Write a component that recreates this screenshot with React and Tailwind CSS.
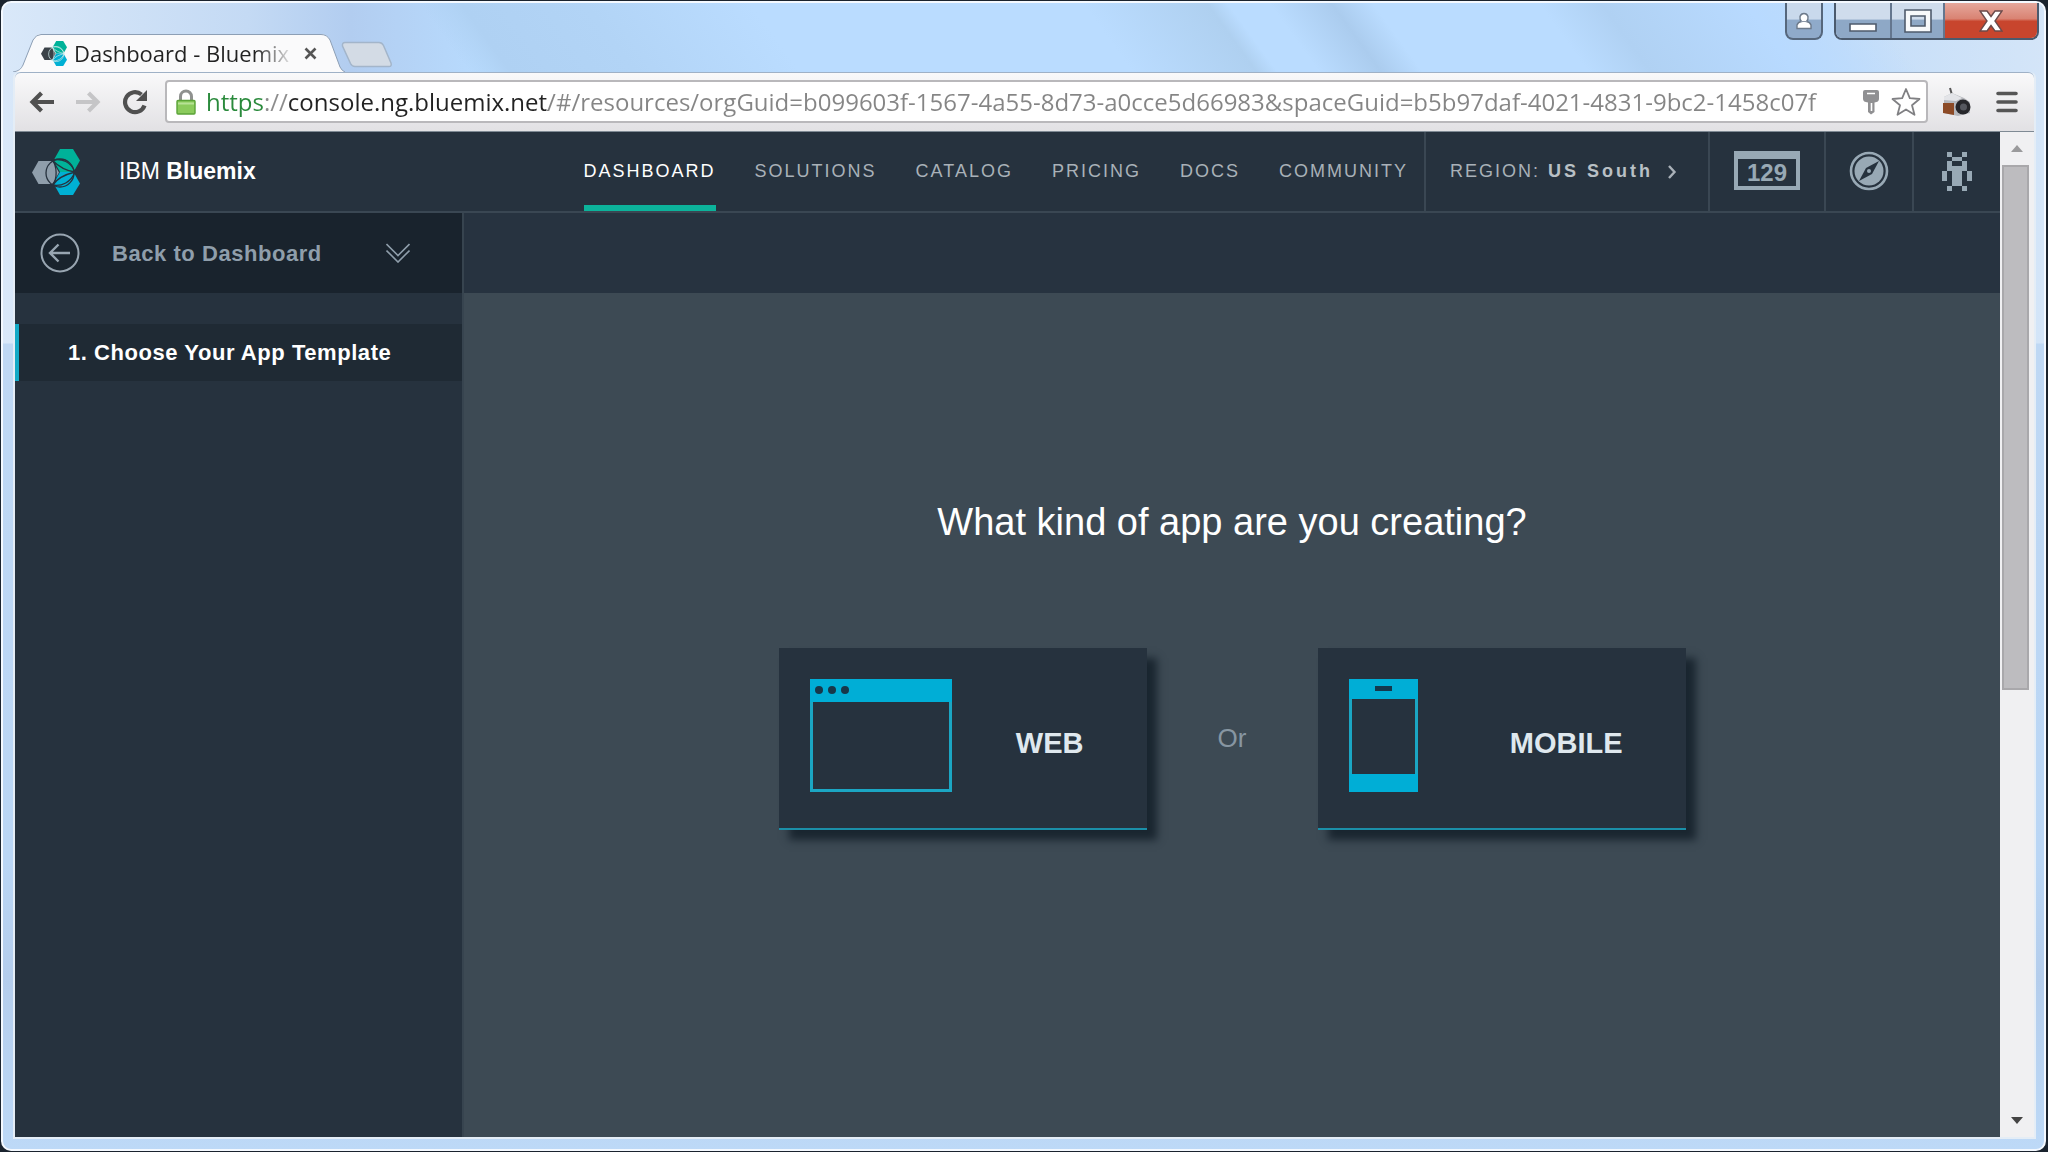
import React from "react";

const NAV = ["DASHBOARD", "SOLUTIONS", "CATALOG", "PRICING", "DOCS", "COMMUNITY"];

const URL_TEXT =
  "https://console.ng.bluemix.net/#/resources/orgGuid=b099603f-1567-4a55-8d73-a0cce5d66983&spaceGuid=b5b97daf-4021-4831-9bc2-1458c07f";

function BluemixLogo({ className, grey = "#8f9eab", line = "#26323e" }) {
  return (
    <svg className={className} viewBox="0 0 48 48" aria-hidden="true">
      <path d="M0 24.500 6.500 13H20.500L27 24.500 20.500 36H6.500Z" fill={grey} />
      <path d="M28 1H41L48 12.500 41.500 24H28L21.500 12.500Z" fill="#00b299" />
      <path d="M28 24H41.500L48 35.500 41 47H28L21.500 35.500Z" fill="#00b0d4" />
      <g fill="none" stroke={line} strokeWidth="1.300">
        <circle cx="28" cy="25" r="14" />
        <path d="M20 12C25 17 26 32 20 37M20 12C30 10 39 14 43 24C35 26 25 30 21 37M20 37C30 39 39 34 43 24C34 23 26 18 20 12" />
      </g>
    </svg>
  );
}

function Tab() {
  return (
    <div className="relative h-[38px] w-[332px]">
      <svg className="absolute inset-0 h-full w-full" viewBox="0 0 332 38" aria-hidden="true">
        <path d="M0 38C6 37 8 35 10 31L20 6Q23 0 28 0H308Q314 0 317 6L327 33Q329 37 332 38Z" fill="#fafafb" />
        <path d="M0 38C6 37 8 35 10 31L20 6Q23 .5 28 .5H308Q314 .5 317 6L327 33Q329 37 332 38" fill="none" stroke="#8d9fb5" />
      </svg>
      <div className="relative flex h-full items-center pl-[28px]">
        <BluemixLogo className="h-[27px] w-[26px]" grey="#3b4248" line="#cfe9ea" />
        <span className="ml-[7px] w-[221px] bg-linear-to-r from-[#222] from-82% to-transparent bg-clip-text text-[22px] whitespace-nowrap text-transparent">
          Dashboard - Bluemix
        </span>
        <button aria-label="Close tab" className="ml-[9px]">
          <svg className="size-[13px]" viewBox="0 0 13 13">
            <path d="M1.500 1.500 11.500 11.500M11.500 1.500 1.500 11.500" stroke="#555" strokeWidth="2.600" />
          </svg>
        </button>
      </div>
    </div>
  );
}

function TitleBar() {
  return (
    <div className="flex h-[69px] items-end justify-between bg-[linear-gradient(54deg,transparent_22%,#afd1f3_24%,#b2d4f6_30%,#badcff_38%,#badcff_54%,#afd0f0_60%,#badcff_61%,#badcff_63%,#abccee_66%,#badcff_68%,#badcff_76%,#b0d1f3_79%,#b8daff_86%,transparent_92%)]">
      <div className="flex items-end">
        <Tab />
        <button aria-label="New tab" className="mb-[4px] -ml-1">
          <svg className="h-[27px] w-[52px]" viewBox="0 0 52 27">
            <path
              d="M4 1.500H38Q41 1.500 42.500 4.500L50 22Q51 25.500 48 25.500H14Q11 25.500 9.500 22.500L1.500 5Q1 1.500 4 1.500Z"
              fill="#d3dbe5"
              stroke="#a3b5ca"
              strokeWidth="1.500"
            />
          </svg>
        </button>
      </div>
      <div className="-mr-[3px] flex self-start">
        <button
          aria-label="Profile"
          className="mr-[11px] flex h-[37px] w-[38px] items-center justify-center rounded-b-lg border-2 border-t-0 border-[#56677c] bg-linear-to-b from-[#c9d9ec] from-45% to-[#8faaca] to-50%"
        >
          <svg className="h-[18px] w-[18px]" viewBox="0 0 18 18">
            <path d="M2 16.500V13Q3 10 6.500 9.500 4.500 7.500 5 4.500 6 1.500 9 1.500T13 4.500Q13.500 7.500 11.500 9.500 15 10 16 13V16.500Z" fill="#fff" stroke="#6d7a8b" strokeWidth="1.400" />
            <path d="M6 9.500H12" stroke="#8d98a8" />
          </svg>
        </button>
        <div className="flex h-[37px] overflow-hidden rounded-b-lg border-2 border-t-0 border-[#4b5a6d]">
          <button
            aria-label="Minimize"
            className="flex w-[56px] items-end justify-center border-r-2 border-[#64768e] bg-linear-to-b from-[#cfdcec] from-45% to-[#8ea8c6] to-50% pb-[6px]"
          >
            <svg className="h-[9px] w-[28px]" viewBox="0 0 28 9">
              <path d="M1 1H27V8H1Z" fill="#fff" stroke="#4f5b6c" strokeWidth="1.600" />
            </svg>
          </button>
          <button
            aria-label="Maximize"
            className="flex w-[53px] items-center justify-center border-r-2 border-[#64768e] bg-linear-to-b from-[#cfdcec] from-45% to-[#8ea8c6] to-50%"
          >
            <svg className="h-[24px] w-[28px]" viewBox="0 0 28 24">
              <path d="M1 1H27V23H1ZM7 7V17H21V7Z" fill="#f7f9fb" fillRule="evenodd" stroke="#4f5b6c" strokeWidth="1.600" />
            </svg>
          </button>
          <button
            aria-label="Close"
            className="flex w-[92px] items-center justify-center bg-linear-to-b from-[#e5a79c] via-[#d98373] via-45% to-[#c8452d] to-52%"
          >
            <svg className="h-[22px] w-[24px]" viewBox="0 0 24 22">
              <path d="M1 1H8L12 6.500 16 1H23L16 11 23 21H16L12 15.500 8 21H1L8 11Z" fill="#fff" stroke="#6b4a4a" strokeWidth="1.400" />
            </svg>
          </button>
        </div>
      </div>
    </div>
  );
}

function Toolbar() {
  return (
    <div className="flex h-[59px] items-center rounded-t-md border-t border-[#9fb1c6] bg-linear-to-b from-[#f9f9fa] to-[#e2e1e4] pr-[16px] pb-px pl-[14px]">
      <button aria-label="Back">
        <svg className="h-[22px] w-[26px]" viewBox="0 0 26 22">
          <path d="M25 11H4M12.500 2 3.500 11 12.500 20" fill="none" stroke="#505050" strokeWidth="4.200" />
        </svg>
      </button>
      <button aria-label="Forward" className="ml-[20px]">
        <svg className="h-[22px] w-[26px]" viewBox="0 0 26 22">
          <path d="M1 11H22M13.500 2 22.500 11 13.500 20" fill="none" stroke="#c5c5c7" strokeWidth="4.200" />
        </svg>
      </button>
      <button aria-label="Reload" className="ml-[21px]">
        <svg className="size-[26px]" viewBox="0 0 26 26">
          <path d="M22.500 16.500A10 10 0 1 1 19.500 5.500" fill="none" stroke="#505050" strokeWidth="4.200" />
          <path d="M25 1V12H14Z" fill="#505050" />
        </svg>
      </button>
      <div className="ml-[17px] flex h-[43px] min-w-0 flex-1 items-center rounded-[4px] border-2 border-[#b9b8bb] bg-white pr-[5px] pl-[9px]">
        <svg className="h-[26px] w-[20px] shrink-0" viewBox="0 0 20 26" aria-hidden="true">
          <path d="M4.500 13V7.500A5.500 5.500 0 0 1 15.500 7.500V13" fill="none" stroke="#8f918f" strokeWidth="3" />
          <rect x="1" y="11.500" width="18" height="13.500" rx="1" fill="#8bcb5c" stroke="#5ba338" strokeWidth="1.400" />
          <path d="M2 14.500H18" stroke="#b7e296" strokeWidth="2" />
        </svg>
        <input
          aria-label="Address"
          defaultValue={URL_TEXT}
          className="ml-[10px] h-[38px] min-w-0 flex-1 bg-[linear-gradient(90deg,#2a8a3c_58px,#8c8c8c_58px,#8c8c8c_82px,#222_82px,#222_342px,#858585_342px)] bg-clip-text text-[24px] text-transparent outline-none"
        />
        <svg className="ml-[11px] h-[26px] w-[18px] shrink-0" viewBox="0 0 18 26" aria-hidden="true">
          <path d="M3 1H15Q17 1 17 3V10Q17 13 12.500 13.500V23L9 25.500 6 23V13.500Q1 13 1 10V3Q1 1 3 1Z" fill="#909092" />
          <path d="M5 4.500H13M9.500 14V22" stroke="#fff" strokeWidth="1.600" />
        </svg>
        <button aria-label="Bookmark this page" className="ml-[11px]">
          <svg className="size-[30px]" viewBox="0 0 30 30">
            <path d="M15 2 18.800 11.200 28.500 12 21 18.200 23.500 27.800 15 22.500 6.500 27.800 9 18.200 1.500 12 11.200 11.200Z" fill="#fff" stroke="#808083" strokeWidth="1.800" strokeLinejoin="round" />
          </svg>
        </button>
      </div>
      <button aria-label="Camera extension" className="ml-[14px]">
        <svg className="size-[30px]" viewBox="0 0 30 30">
          <path d="M8 1 10 8" stroke="#555" strokeWidth="2" />
          <path d="M2 10 10 6 22 11 28 15V26L16 29 2 26Z" fill="#b5b7bc" />
          <path d="M2 10 10 6 20 11 14 14 2 13Z" fill="#e3e4e8" />
          <path d="M1 16H12V28L1 26Z" fill="#8c4a26" />
          <circle cx="21" cy="20" r="7.500" fill="#26262a" />
          <circle cx="21.500" cy="20" r="3.500" fill="#55575e" />
        </svg>
      </button>
      <button aria-label="Menu" className="ml-[24px]">
        <svg className="h-[22px] w-[22px]" viewBox="0 0 22 22">
          <path d="M2 2.500H20M2 11H20M2 19.500H20" stroke="#555" strokeWidth="3.600" strokeLinecap="round" />
        </svg>
      </button>
    </div>
  );
}

function Header() {
  return (
    <header className="flex h-[81px] items-stretch border-b-2 border-[#3a4753] bg-[#26323e]">
      <a href="#home" className="flex items-center gap-[39px] pl-[17px] text-[23px] text-white">
        <BluemixLogo className="size-[48px]" />
        <span>
          IBM <b>Bluemix</b>
        </span>
      </a>
      <nav className="ml-auto flex gap-[39px] pr-[16px] text-[18px] tracking-[2px]">
        {NAV.map((item, i) => (
          <a
            key={item}
            href={"#" + item.toLowerCase()}
            className={
              i === 0
                ? "flex items-center border-b-6 border-[#0cb39b] pt-1.5 text-white"
                : "flex items-center text-[#a9b1b8]"
            }
          >
            {item}
          </a>
        ))}
      </nav>
      <button className="flex w-[284px] items-center border-l-2 border-[#3a4753] pl-[24px] text-[18px] tracking-[2px] text-[#a9b1b8]">
        REGION:
        <b className="ml-[8px] tracking-[3px] text-[#b9c0c5]">US South</b>
        <svg className="ml-[14px] h-[14px] w-[10px]" viewBox="0 0 10 14" aria-hidden="true">
          <path d="M2 1 7.500 7 2 13" fill="none" stroke="#a9b1b8" strokeWidth="2.400" />
        </svg>
      </button>
      <button aria-label="129 days left" className="flex w-[116px] items-center justify-center border-l-2 border-[#3a4753] pb-0.5">
        <span className="flex h-[39px] w-[66px] items-center justify-center border-4 border-t-8 border-[#98a9b5] text-[24px] leading-none font-bold text-[#98a9b5]">
          129
        </span>
      </button>
      <button aria-label="Explore" className="flex w-[88px] items-center justify-center border-l-2 border-[#3a4753] pb-0.5">
        <svg className="size-[40px]" viewBox="0 0 40 40">
          <circle cx="20" cy="20" r="18" fill="none" stroke="#98a9b5" strokeWidth="2.600" />
          <circle cx="20" cy="20" r="14.500" fill="#98a9b5" />
          <path d="M30 10 23 23 10 30 17 17Z" fill="#26323e" />
          <circle cx="20" cy="20" r="2" fill="#98a9b5" />
        </svg>
      </button>
      <button aria-label="Account" className="flex w-[88px] items-center justify-center border-l-2 border-[#3a4753] pb-0.5">
        <svg className="h-[40px] w-[30px]" viewBox="0 0 30 40" fill="#98a9b5">
          <path d="M5 1H10V6H5ZM20 1H25V6H20ZM10 6H20V10H10ZM5 10H10V15H20V10H25V20H20V35H10V20H5ZM0 20H5V30H0ZM25 20H30V30H25ZM5 35H10V40H5ZM20 35H25V40H20Z" />
        </svg>
      </button>
    </header>
  );
}

function Sidebar() {
  return (
    <aside className="flex w-[449px] shrink-0 flex-col border-r-2 border-[#37444f] bg-[#26323e]">
      <div className="flex h-[80px] items-center bg-[#19232d] pl-[25px]">
        <a href="#dashboard" className="flex items-center gap-[32px] text-[22px] font-bold tracking-wide text-[#8f9eab]">
          <svg className="size-[40px]" viewBox="0 0 40 40" fill="none" stroke="#98a5b1" aria-hidden="true">
            <circle cx="20" cy="20" r="18.500" strokeWidth="2" />
            <path d="M30 20H10M18.500 11.500 10 20 18.500 28.500" strokeWidth="2.400" />
          </svg>
          Back to Dashboard
        </a>
        <button aria-label="Expand" className="ml-[64px]">
          <svg className="h-[20px] w-[24px]" viewBox="0 0 24 20" fill="none" stroke="#8f9eab" strokeWidth="1.600">
            <path d="M.5 1 12 12.500 23.500 1M.5 7.500 12 19 23.500 7.500" />
          </svg>
        </button>
      </div>
      <a
        href="#template"
        className="mt-[31px] flex h-[57px] items-center border-l-4 border-[#12a9c6] bg-[#1f2a34] pl-[49px] text-[22px] font-bold tracking-wide whitespace-nowrap text-white"
      >
        1. Choose Your App Template
      </a>
    </aside>
  );
}

function Choice({ icon, children }) {
  return (
    <button className="flex h-[182px] w-[368px] items-start justify-between border-b-2 border-[#1b8fa8] bg-[#26323e] pt-[31px] pr-[63px] pl-[31px] text-[29px] font-bold text-[#dfe8ee] shadow-[10px_10px_8px_#1a2630]">
      {icon}
      <span className="mt-[43px]">{children}</span>
    </button>
  );
}

function WebIcon() {
  return (
    <svg className="h-[113px] w-[142px]" viewBox="0 0 142 113" aria-hidden="true">
      <rect x="1.500" y="1.500" width="139" height="110" fill="none" stroke="#1ba6c3" strokeWidth="3" />
      <rect width="142" height="23" fill="#00aed6" />
      <g fill="#17384a">
        <circle cx="9" cy="11" r="4" />
        <circle cx="22" cy="11" r="4" />
        <circle cx="35" cy="11" r="4" />
      </g>
    </svg>
  );
}

function MobileIcon() {
  return (
    <svg className="h-[113px] w-[69px]" viewBox="0 0 69 113" aria-hidden="true">
      <rect x="1.500" y="1.500" width="66" height="110" fill="none" stroke="#1ba6c3" strokeWidth="3" />
      <rect width="69" height="20" fill="#00aed6" />
      <rect y="95" width="69" height="18" fill="#00aed6" />
      <rect x="26" y="7" width="17" height="5" fill="#14384d" />
    </svg>
  );
}

function Main() {
  return (
    <main className="flex min-w-0 flex-1 flex-col bg-[#3d4a54]">
      <div className="h-[80px] bg-[#273340]" />
      <div className="flex flex-col items-center pt-[201px]">
        <h1 className="text-[38px] leading-[56px] text-white">What kind of app are you creating?</h1>
        <div className="mt-[98px] flex items-center">
          <Choice icon={<WebIcon />}>WEB</Choice>
          <span className="w-[171px] pb-0.5 text-center text-[26px] text-[#8796a2]">Or</span>
          <Choice icon={<MobileIcon />}>MOBILE</Choice>
        </div>
      </div>
    </main>
  );
}

function ScrollBar() {
  return (
    <div className="flex w-[34px] shrink-0 flex-col items-center bg-[#f0f0f2]">
      <button aria-label="Scroll up" className="flex h-[33px] w-full items-center justify-center">
        <svg className="h-[7px] w-[12px]" viewBox="0 0 12 7">
          <path d="M6 0 12 7H0Z" fill="#9a9a9c" />
        </svg>
      </button>
      <div className="mr-1 h-[525px] w-[27px] border-2 border-[#a9a8ab] bg-[#bdbcbf]" />
      <button aria-label="Scroll down" className="mt-auto flex h-[34px] w-full items-center justify-center">
        <svg className="h-[7px] w-[12px]" viewBox="0 0 12 7">
          <path d="M0 0H12L6 7Z" fill="#444" />
        </svg>
      </button>
    </div>
  );
}

export default function App() {
  return (
    <div className="flex min-h-screen bg-[#1a232e] p-px pr-[2px] font-['Open_Sans','Noto_Sans',sans-serif]">
      <div className="flex flex-1 flex-col rounded-[10px] border-2 border-[#f4f9ff] bg-[linear-gradient(180deg,transparent_340px,#bfd8f4_341px,#bad6f5_75%,#b4cdec_85%,#bdd9f7),linear-gradient(90deg,#d9e8f9,#c4daf4_12%,#b2cdf0_17%,#b8dcff_24%,#b9dcff_60%,#b4d6fa_80%,#d4e5f8)] pr-[8px] pb-[10px] pl-[10px]">
        <TitleBar />
        <div className="flex flex-1 flex-col rounded-t-md border-2 border-t-0 border-[#e4edf6]">
          <Toolbar />
          <div className="flex flex-1 flex-col border-t border-[#7f8a94]">
            <div className="flex flex-1">
              <div className="flex min-w-0 flex-1 flex-col font-['Liberation_Sans',Arial,sans-serif]">
                <Header />
                <div className="flex flex-1">
                  <Sidebar />
                  <Main />
                </div>
              </div>
              <ScrollBar />
            </div>
          </div>
        </div>
      </div>
    </div>
  );
}
